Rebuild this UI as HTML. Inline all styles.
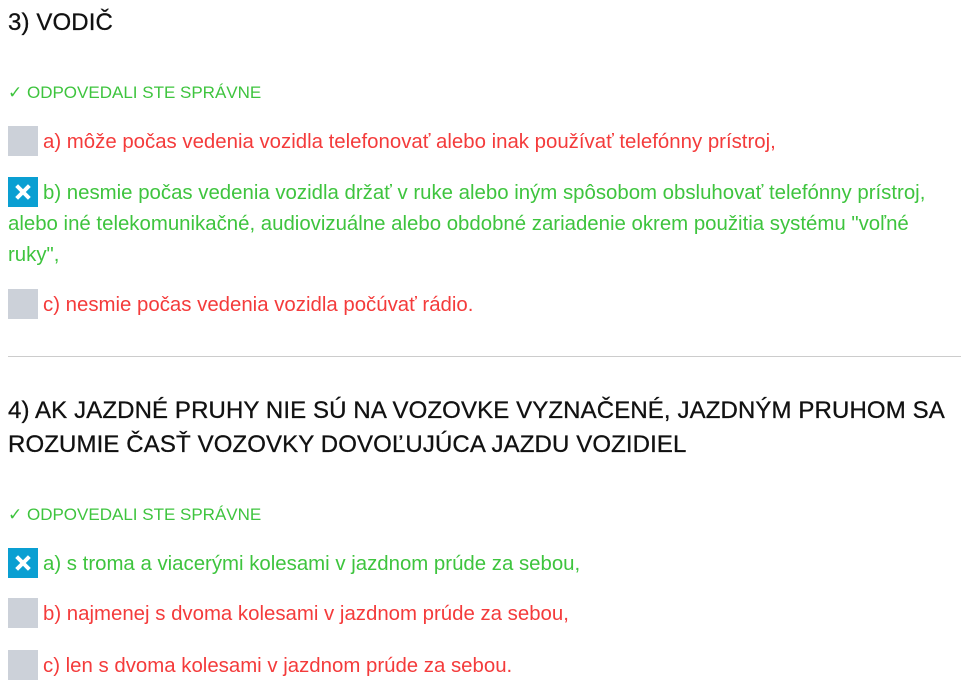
<!DOCTYPE html>
<html><head><meta charset="utf-8"><style>
body{margin:0;background:#fff;width:971px;height:685px;overflow:hidden;position:relative;font-family:"Liberation Sans",sans-serif}
h{position:absolute;left:8px;font-size:24px;color:#111;letter-spacing:0.12px;white-space:nowrap;line-height:34px;-webkit-text-stroke:0.3px #111}
.ok{position:absolute;left:8px;font-size:17px;color:#3ec43e;white-space:nowrap}
.r{color:#f43b3b}.g{color:#3ec43e}
.t{position:absolute;left:43px;font-size:20.4px;line-height:31px;white-space:nowrap;margin-top:1px}
.cb{position:absolute;left:8px;width:30px;height:30px;background:#ccd1d9}
.x{background:#0a9fd2}
.x:before,.x:after{content:"";position:absolute;left:6px;top:13px;width:18px;height:4px;background:#fff;transform:rotate(45deg)}
.x:after{transform:rotate(-45deg)}
hr{position:absolute;left:8px;top:356px;width:953px;margin:0;border:0;border-top:1px solid #ccc}
</style></head><body>
<h style="top:6px">3) VODIČ</h>
<div class="ok" style="top:83px">✓ ODPOVEDALI STE SPRÁVNE</div>
<div class="cb" style="top:126px"></div>
<div class="t r" style="top:126px">a) môže počas vedenia vozidla telefonovať alebo inak používať telefónny prístroj,</div>
<div class="cb x" style="top:177px"></div>
<div class="t g" style="top:177px;left:43px">b) nesmie počas vedenia vozidla držať v ruke alebo iným spôsobom obsluhovať telefónny prístroj,</div>
<div class="t g" style="top:208px;left:8px">alebo iné telekomunikačné, audiovizuálne alebo obdobné zariadenie okrem použitia systému "voľné</div>
<div class="t g" style="top:239px;left:8px">ruky",</div>
<div class="cb" style="top:289px"></div>
<div class="t r" style="top:289px">c) nesmie počas vedenia vozidla počúvať rádio.</div>
<hr>
<h style="top:394px">4) AK JAZDNÉ PRUHY NIE SÚ NA VOZOVKE VYZNAČENÉ, JAZDNÝM PRUHOM SA</h>
<h style="top:428px">ROZUMIE ČASŤ VOZOVKY DOVOĽUJÚCA JAZDU VOZIDIEL</h>
<div class="ok" style="top:505px">✓ ODPOVEDALI STE SPRÁVNE</div>
<div class="cb x" style="top:548px"></div>
<div class="t g" style="top:548px">a) s troma a viacerými kolesami v jazdnom prúde za sebou,</div>
<div class="cb" style="top:598px"></div>
<div class="t r" style="top:598px">b) najmenej s dvoma kolesami v jazdnom prúde za sebou,</div>
<div class="cb" style="top:650px"></div>
<div class="t r" style="top:650px">c) len s dvoma kolesami v jazdnom prúde za sebou.</div>
</body></html>
